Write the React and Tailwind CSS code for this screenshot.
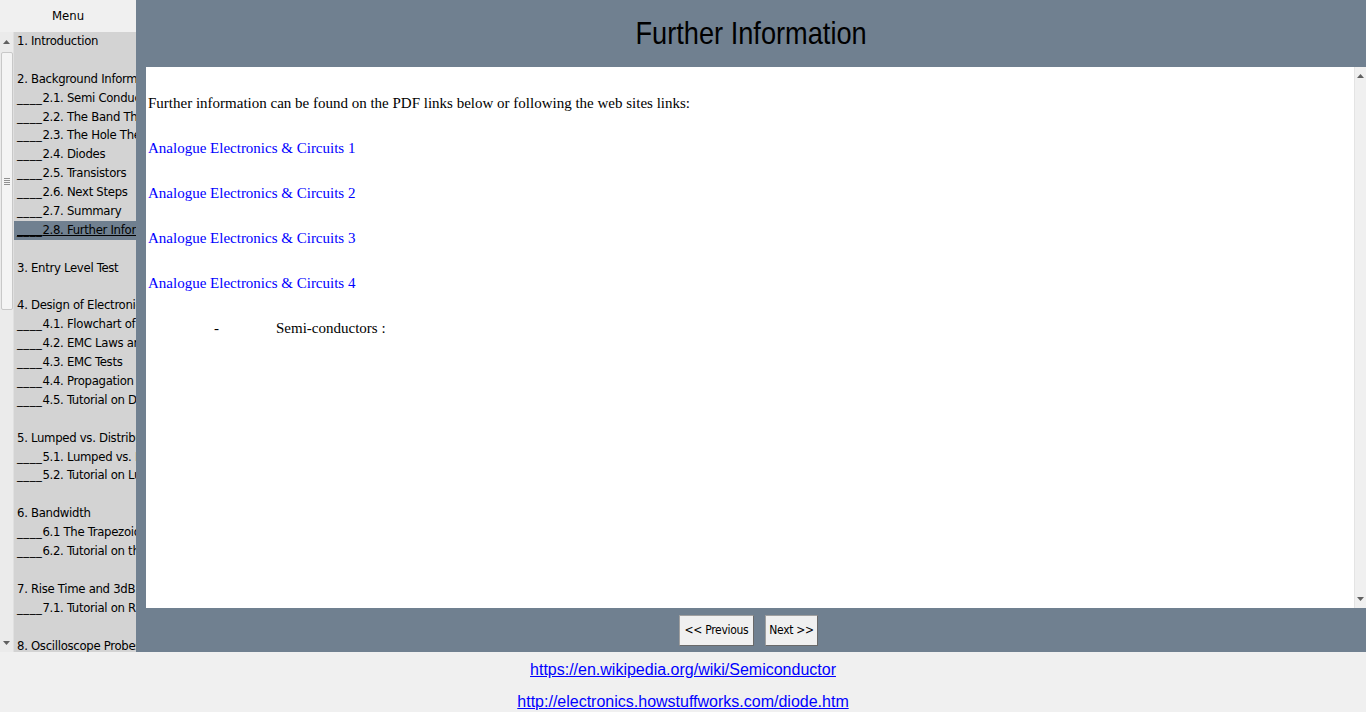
const menu = [
  { t: "1. Introduction" },
  { t: "" },
  { t: "2. Background Information" },
  { t: "2.1. Semi Conductors", sub: true },
  { t: "2.2. The Band Theory", sub: true },
  { t: "2.3. The Hole Theory", sub: true },
  { t: "2.4. Diodes", sub: true },
  { t: "2.5. Transistors", sub: true },
  { t: "2.6. Next Steps", sub: true },
  { t: "2.7. Summary", sub: true },
  { t: "2.8. Further Information", sub: true, active: true },
  { t: "" },
  { t: "3. Entry Level Test" },
  { t: "" },
  { t: "4. Design of Electronic Circuits" },
  { t: "4.1. Flowchart of a Design", sub: true },
  { t: "4.2. EMC Laws and Standards", sub: true },
  { t: "4.3. EMC Tests", sub: true },
  { t: "4.4. Propagation Delay", sub: true },
  { t: "4.5. Tutorial on Design", sub: true },
  { t: "" },
  { t: "5. Lumped vs. Distributed" },
  { t: "5.1. Lumped vs. Distributed", sub: true },
  { t: "5.2. Tutorial on Lumped", sub: true },
  { t: "" },
  { t: "6. Bandwidth" },
  { t: "6.1 The Trapezoid", sub: true },
  { t: "6.2. Tutorial on the Bandwidth", sub: true },
  { t: "" },
  { t: "7. Rise Time and 3dB (Bandwidth)" },
  { t: "7.1. Tutorial on Rise Time", sub: true },
  { t: "" },
  { t: "8. Oscilloscope Probes" },
];

const links = [
  "Analogue Electronics & Circuits 1",
  "Analogue Electronics & Circuits 2",
  "Analogue Electronics & Circuits 3",
  "Analogue Electronics & Circuits 4",
];

const narrow = '"DejaVu Sans Condensed", "Liberation Sans", sans-serif';

const UpArrow = () => (
  <svg width="7" height="4" viewBox="0 0 7 4">
    <path d="M3.5 0 L7 4 L0 4 Z" fill="#606060" />
  </svg>
);

const DownArrow = () => (
  <svg width="7" height="4" viewBox="0 0 7 4">
    <path d="M0 0 L7 0 L3.5 4 Z" fill="#606060" />
  </svg>
);

const App = () => {
  return (
    <div className="w-[1366px] h-[712px] bg-[#f0f0f0] flex flex-col overflow-hidden">
      <div className="flex h-[652px]">
        {/* Menu */}
        <aside className="w-[136px] flex flex-col shrink-0">
          <div
            className="h-[32px] bg-[#f0f0f0] flex items-center justify-center text-[13px] text-black"
            style={{ fontFamily: narrow }}
          >
            Menu
          </div>
          <div className="flex flex-1 min-h-0">
            <div className="w-[14px] bg-[#ebebeb] flex flex-col items-center border-r border-[#e0e0e0]">
              <div className="h-[18px] flex items-center justify-center pt-[2px]">
                <UpArrow />
              </div>
              <div className="w-[12px] h-[258px] mt-[2px] bg-[#f4f4f4] border border-[#c8c8c8] rounded-[2px] flex items-center justify-center">
                <div className="flex flex-col gap-[1px]">
                  <div className="w-[6px] h-px bg-[#909090]" />
                  <div className="w-[6px] h-px bg-[#909090]" />
                  <div className="w-[6px] h-px bg-[#909090]" />
                  <div className="w-[6px] h-px bg-[#909090]" />
                </div>
              </div>
              <div className="flex-1" />
              <div className="h-[16px] flex items-start justify-center pt-[5px]">
                <DownArrow />
              </div>
            </div>
            <ul
              className="flex-1 bg-[#d3d3d3] overflow-hidden text-[13px] text-black"
              style={{ fontFamily: narrow }}
            >
              {menu.map((m, i) => (
                <li
                  key={i}
                  className={
                    "h-[18.9px] leading-[18.9px] whitespace-nowrap pl-[3px] tracking-[-0.3px] " +
                    (m.active ? "bg-[#708090] underline" : "")
                  }
                >
                  {m.sub && <span className="tracking-[0.5px]">____</span>}
                  {m.t || "\u00a0"}
                </li>
              ))}
            </ul>
          </div>
        </aside>

        {/* Main */}
        <main className="flex-1 bg-[#708090] flex flex-col min-w-0">
          <h1
            className="h-[67px] flex items-center justify-center text-[32px] text-black pb-[1px]"
            style={{ fontFamily: '"Liberation Sans", Arial, sans-serif' }}
          >
            <span className="inline-block scale-x-[0.85]">Further Information</span>
          </h1>
          <div className="ml-[10px] flex-1 min-h-0 bg-white flex">
            <div
              className="flex-1 pl-[2px] pt-[27px] flex flex-col gap-[26px] text-[15px] leading-[19px] text-black"
              style={{ fontFamily: '"Liberation Serif", "Times New Roman", serif' }}
            >
              <p>Further information can be found on the PDF links below or following the web sites links:</p>
              {links.map((l) => (
                <a key={l} href="#" className="text-[#0000ff] w-fit">
                  {l}
                </a>
              ))}
              <div className="flex">
                <span className="w-[62px] pl-[66px] box-content">-</span>
                <span>Semi-conductors :</span>
              </div>
            </div>
            <div className="w-[12px] bg-[#f0f0f0] border-l border-[#e4e4e4] flex flex-col items-center justify-between py-[7px]">
              <UpArrow />
              <DownArrow />
            </div>
          </div>
          <div
            className="h-[44px] flex items-center justify-center gap-[11px] text-[12px] text-black pr-[5px]"
            style={{ fontFamily: narrow }}
          >
            <button className="h-[31px] w-[75px] whitespace-nowrap tracking-[-0.3px] bg-[#f0f0f0] border border-[#a0a0a0] border-b-[#696969] border-r-[#696969]">
              &lt;&lt; Previous
            </button>
            <button className="h-[31px] w-[53px] whitespace-nowrap tracking-[-0.3px] bg-[#f0f0f0] border border-[#a0a0a0] border-b-[#696969] border-r-[#696969]">
              Next &gt;&gt;
            </button>
          </div>
        </main>
      </div>

      {/* Footer links */}
      <div
        className="flex flex-col items-center pt-[6px] gap-[8px] text-[16px] leading-[24px]"
        style={{ fontFamily: '"Liberation Sans", Arial, sans-serif' }}
      >
        <a href="#" className="text-[#0000ff] underline">
          https://en.wikipedia.org/wiki/Semiconductor
        </a>
        <a href="#" className="text-[#0000ff] underline">
          http://electronics.howstuffworks.com/diode.htm
        </a>
      </div>
    </div>
  );
};

export default App;
